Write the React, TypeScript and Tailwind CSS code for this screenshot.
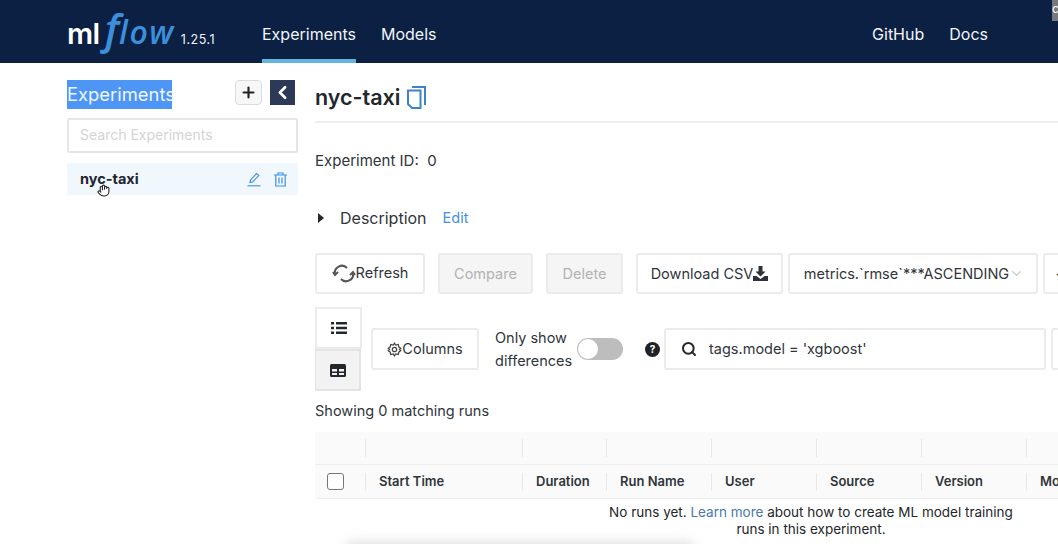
import React from "react";
import { ChevronDown, ChevronLeft, Hand, Plus, Search } from "lucide-react";

const columns = [
  { name: "", width: "w-[52px]" },
  { name: "Start Time", width: "w-[157px]" },
  { name: "Duration", width: "w-[84px]" },
  { name: "Run Name", width: "w-[105px]" },
  { name: "User", width: "w-[105px]" },
  { name: "Source", width: "w-[105px]" },
  { name: "Version", width: "w-[105px]" },
  { name: "Models", width: "w-[120px]" },
];

const Header = () => (
  <header className="flex h-[63px] shrink-0 items-stretch justify-between bg-[#0b2043] pl-[67px] text-[#f2f5f9]">
    <div className="flex items-stretch">
      <div className="flex w-[195px] items-baseline pt-[7px]">
        <span className="text-[29px] leading-none font-semibold tracking-[-0.5px] text-white">ml</span>
        <span className="ml-[5px] font-['Open_Sans'] text-[42px] leading-none font-semibold text-[#3c8fdb] italic">f</span>
        <span className="font-['Open_Sans'] text-[32px] leading-none font-semibold tracking-[1.5px] text-[#3c8fdb] italic">low</span>
        <span className="ml-[6px] text-[12.5px] tracking-[0.5px]">1.25.1</span>
      </div>
      <div className="flex h-full flex-col items-center justify-center border-b-[4px] border-[#63b5e0] pt-[9px] text-[16px]">
        Experiments
      </div>
      <div className="ml-[25px] flex items-center pt-[5px] text-[16px]">Models</div>
    </div>
    <div className="flex items-start">
      <div className="mt-[24px] flex gap-[25px] text-[16px] leading-5">
        <span>GitHub</span>
        <span>Docs</span>
      </div>
      <div className="ml-[64px] h-[21px] w-[6px] overflow-hidden bg-[#77797d] text-[12px] text-white">c</div>
    </div>
  </header>
);

const Sidebar = () => (
  <aside className="relative w-[315px] shrink-0 pt-[17px] pl-[67px]">
    <div className="flex h-[29px] w-[231px] items-start justify-between">
      <span className="flex h-[29px] w-[105px] items-center bg-[#4d96f5] text-[18.4px] text-[#eef5ff]">Experiments</span>
      <div className="mr-[3px] flex gap-[8px]">
        <button className="flex h-[25px] w-[27px] items-center justify-center rounded-[4px] border border-[#dcdcdc] bg-[#f7f7f7] text-[#222]">
          <Plus size={17} strokeWidth={3} />
        </button>
        <button className="flex h-[25px] w-[25px] items-center justify-center bg-[#2c3a57] text-white">
          <ChevronLeft size={21} strokeWidth={3} />
        </button>
      </div>
    </div>
    <div className="mt-[9px] flex h-[35px] w-[231px] items-center rounded-[2px] border-2 border-[#e6e6e6] px-[11px] pb-[2px] text-[14px] text-[#d4d4d4]">
      Search Experiments
    </div>
    <div className="mt-[10px] flex h-[32px] w-[231px] items-center justify-between bg-[#f0f7fd] pr-[11px] pl-[13px]">
      <span className="text-[14.5px] font-bold text-[#20262e]">nyc-taxi</span>
      <div className="flex items-center gap-[13px] text-[#3f8fe6]">
        <svg width="14" height="15" viewBox="0 0 14 15" fill="none" stroke="currentColor" strokeWidth="1.1">
          <path d="M3 10.5 3.6 8 9.6 1.5 11.8 3.6 5.6 10z" />
          <path d="M.5 13.8h13" />
        </svg>
        <svg width="13" height="15" viewBox="0 0 13 15" fill="none" stroke="currentColor" strokeWidth="1.2">
          <path d="M0 3h13M4 3V1h5v2M1.8 3v11h9.4V3M5 5.5v6M8 5.5v6" />
        </svg>
      </div>
    </div>
    <Hand size={13} className="absolute top-[121px] left-[97px] fill-white text-[#222]" />
  </aside>
);

const Btn = ({ children, className }: { children: React.ReactNode; className: string }) => (
  <div className={`flex shrink-0 items-center justify-center rounded-[3px] border-2 border-[#ebebeb] text-[14.5px] ${className}`}>
    {children}
  </div>
);

const Toolbar = () => (
  <div className="flex flex-col">
    <div className="flex h-[41px] items-stretch">
      <Btn className="w-[110px] text-[#30353b]">
        <svg width="24" height="19" viewBox="0 0 24 19" fill="none" stroke="#555" strokeWidth="2">
          <path d="M3 10a7 7 0 0 1 12-6M21 9a7 7 0 0 1-12 6" />
          <path d="M1 8l2 3 3-3M18 11l3-3 2 3" />
        </svg>
        <span className="-mt-[2px]">Refresh</span>
      </Btn>
      <Btn className="ml-[13px] w-[95px] bg-[#f5f5f5] text-[#b2b2b2]">Compare</Btn>
      <Btn className="ml-[13px] w-[77px] bg-[#f5f5f5] text-[#b2b2b2]">Delete</Btn>
      <Btn className="ml-[13px] w-[147px] text-[#30353b]">
        Download CSV
        <svg width="15" height="15" viewBox="0 0 15 15" fill="#2d3238">
          <path d="M5.5 0h4v5.5h3L7.5 10.5 2.5 5.5h3zM0 10h3.5l4 3 4-3H15v5H0z" />
        </svg>
      </Btn>
      <Btn className="ml-[5px] w-[250px] justify-between pr-[8px] pl-[10px] text-[#30353b]">
        <span className="whitespace-nowrap">metrics.`rmse`***ASCENDING</span>
        <ChevronDown size={15} className="shrink-0 text-[#c4c4c4]" />
      </Btn>
      <Btn className="ml-[5px] w-[40px] justify-start pl-[10px] text-[#30353b]">↓</Btn>
    </div>
    <div className="mt-[13px] flex items-center">
      <div className="flex flex-col">
        <div className="flex h-[42px] w-[47px] items-center justify-center border-2 border-[#ebebeb] text-[#23272c]">
          <svg width="16" height="12" viewBox="0 0 16 12" fill="currentColor">
            <path d="M0 0h3v2.4H0zM5 0h11v2.4H5zM0 4.800h3v2.400H0zM5 4.800h11v2.400H5zM0 9.600h3V12H0zM5 9.600h11V12H5z" />
          </svg>
        </div>
        <div className="-ml-px flex h-[42px] w-[47px] items-center justify-center border-2 border-[#e4e4e4] bg-[#f2f2f2] text-[#23272c]">
          <svg width="16" height="13" viewBox="0 0 16 13" fill="currentColor">
            <path d="M1.5 0h13A1.5 1.5 0 0 1 16 1.5v10a1.5 1.5 0 0 1-1.5 1.5h-13A1.5 1.5 0 0 1 0 11.5v-10A1.5 1.5 0 0 1 1.5 0zM2 5v2.500h5V5zm7 0v2.500h5V5zM2 9v2h5V9zm7 0v2h5V9z" fillRule="evenodd" />
          </svg>
        </div>
      </div>
      <Btn className="ml-[9px] h-[42px] w-[108px] gap-0 text-[#30353b]">
        <svg width="15" height="15" viewBox="0 0 24 24" fill="none" stroke="#444" strokeWidth="2">
          <circle cx="12" cy="12" r="3.5" />
          <path d="M12 2l2 3 4-1 1 4 3 2-2 2 2 2-3 2-1 4-4-1-2 3-2-3-4 1-1-4-3-2 2-2-2-2 3-2 1-4 4 1z" />
        </svg>
        Columns
      </Btn>
      <div className="ml-[16px] w-[82px] shrink-0 text-[14.5px] leading-[23px] text-[#30353b]">
        Only show
        <br />
        differences
      </div>
      <div className="flex h-[22px] w-[46px] shrink-0 items-center rounded-full bg-[#bdbdbd] pl-[1px]">
        <div className="h-[20px] w-[20px] rounded-full bg-white" />
      </div>
      <div className="ml-[22px] flex h-[15px] w-[15px] shrink-0 items-center justify-center rounded-full bg-[#1f2226] text-[10px] font-bold text-white">
        ?
      </div>
      <div className="ml-[4px] flex h-[42px] w-[382px] shrink-0 items-center rounded-[3px] border-2 border-[#ebebeb] pl-[15px] text-[14.5px] text-[#30353b]">
        <Search size={16} strokeWidth={3} className="text-[#23272c]" />
        <span className="ml-[12px]">tags.model = 'xgboost'</span>
      </div>
      <div className="ml-[5px] h-[42px] w-[40px] shrink-0 rounded-[3px] border-2 border-[#ebebeb]" />
    </div>
  </div>
);

const RunsTable = () => (
  <div className="-ml-px w-[800px] text-[13px]">
    <div className="flex h-[33px] items-center border-b border-[#eeeeee] bg-[#fafafa]">
      {columns.map((c, i) => (
        <div key={i} className={`h-[18px] shrink-0 border-r border-[#e8e8e8] ${c.width}`} />
      ))}
    </div>
    <div className="flex h-[34px] items-center border-b border-[#eeeeee] bg-[#fafafa] font-semibold text-[#30353b]">
      {columns.map((c, i) => (
        <div key={i} className={`flex h-[18px] shrink-0 items-center border-r border-[#e8e8e8] pl-[13px] ${c.width}`}>
          {i === 0 ? <div className="h-[17px] w-[17px] rounded-[3px] border border-[#777] bg-white" /> : c.name}
        </div>
      ))}
    </div>
    <p className="mt-[5px] ml-[287px] w-[420px] text-center text-[13.5px] leading-[17px] text-[#23272c]">
      No runs yet. <span className="text-[#4a77ad]">Learn more</span> about how to create ML model training runs in this experiment.
    </p>
  </div>
);

export default function App() {
  return (
    <div className="relative flex h-[544px] w-[1058px] flex-col overflow-hidden bg-white font-['Inter',sans-serif]">
      <Header />
      <div className="flex min-h-0 flex-1">
        <Sidebar />
        <main className="min-w-0 flex-1 overflow-hidden">
          <div className="flex h-[60px] w-[800px] items-center gap-[7px] border-b-2 border-[#eeeeee] pt-[10px]">
            <span className="text-[21.5px] font-semibold text-[#23272c]">nyc-taxi</span>
            <svg width="19" height="23" viewBox="0 0 19 23" fill="none" stroke="#3f82c9" strokeWidth="2">
              <path d="M5 1h13v18M1 4.5h12.5V22H5l-4-4z" />
            </svg>
          </div>
          <div className="mt-[28px] text-[15px] leading-5 text-[#30353b]">Experiment ID:&nbsp; 0</div>
          <div className="mt-[34px] flex h-[26px] items-center text-[#30353b]">
            <div className="ml-[3px] h-0 w-0 border-y-[5px] border-l-[6px] border-y-transparent border-l-[#23272c]" />
            <span className="ml-[16px] text-[16px]">Description</span>
            <span className="ml-[16px] text-[14.5px] text-[#3f8fe6]">Edit</span>
          </div>
          <div className="mt-[22px]">
            <Toolbar />
          </div>
          <div className="mt-[10px] h-[20px] text-[14.5px] leading-5 text-[#30353b]">Showing 0 matching runs</div>
          <div className="mt-[11px]">
            <RunsTable />
          </div>
        </main>
      </div>
      <div className="absolute -bottom-[14px] left-[345px] h-[16px] w-[350px] rounded-full bg-[#dddddd] blur-[6px]" />
    </div>
  );
}
